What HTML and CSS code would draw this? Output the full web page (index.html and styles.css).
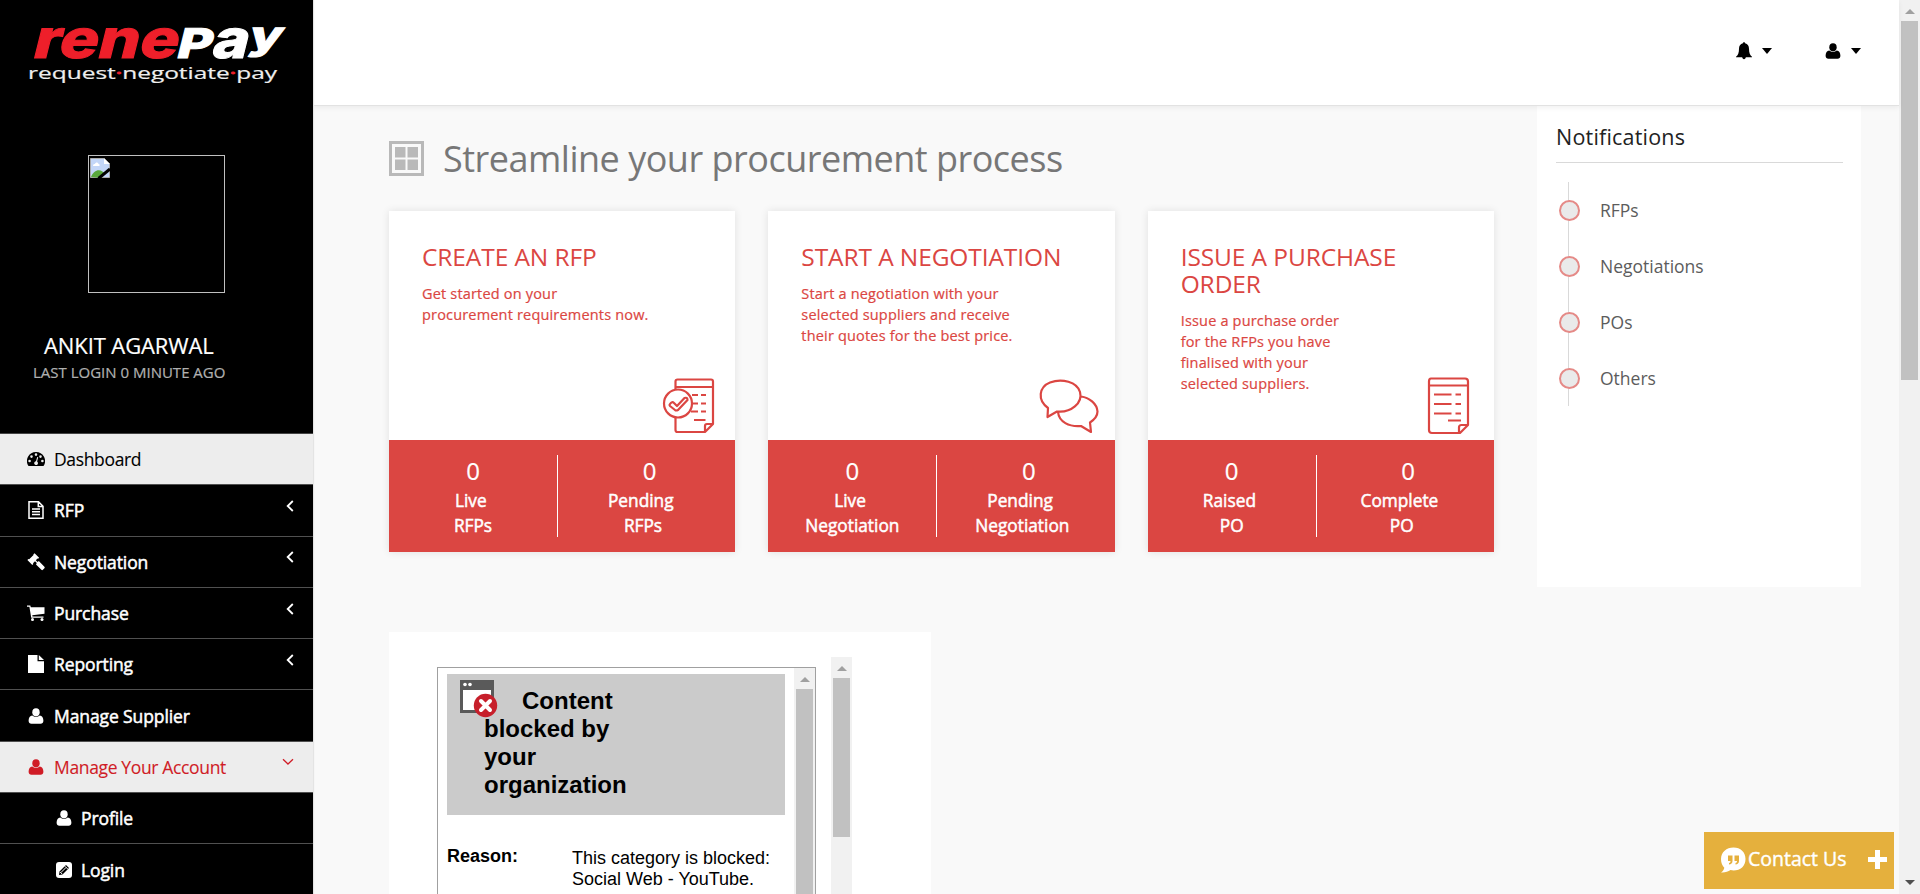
FILE: index.html
```html
<!DOCTYPE html>
<html lang="en">
<head>
<meta charset="utf-8">
<title>Renepay Dashboard</title>
<link rel="stylesheet" href="styles.css">
</head>
<body>
<svg class="sprite" aria-hidden="true">
  <symbol id="i-user" viewBox="0 0 16 16"><ellipse cx="8" cy="4.2" rx="3.7" ry="4"/><path d="M4.2 7.4C2 7.6.6 9.400.6 12.800.6 14.900 1.800 15.800 3.400 15.800h9.200c1.600 0 2.800-.9 2.800-3C15.400 9.400 14 7.600 11.800 7.400 9.700 9.200 6.300 9.200 4.200 7.400z"/></symbol>
  <symbol id="i-bell" viewBox="0 0 16 18"><path d="M8 .3c-.7 0-1.100.5-1.100 1C4.200 1.900 3 4.200 3 6.700c0 4-1 6.500-3 8.100v.5h6.200c.1 1.100.8 1.900 1.800 1.900s1.700-.8 1.800-1.900H16v-.5c-2-1.600-3-4.100-3-8.100 0-2.500-1.200-4.800-3.900-5.400 0-.5-.4-1-1.100-1z"/></symbol>
  <symbol id="i-dash" viewBox="0 0 18 15"><path fill-rule="evenodd" d="M9 .5a9 9 0 0 0-7.700 13.700c.2.300.4.400.7.400h14c.3 0 .5-.1.700-.4A9 9 0 0 0 9 .5zM2.600 8.200a1.300 1.300 0 1 1 0 2.600 1.300 1.300 0 0 1 0-2.600zM4.500 3.800a1.300 1.300 0 1 1 0 2.600 1.300 1.300 0 0 1 0-2.600zM9 1.800a1.300 1.300 0 1 1 0 2.600 1.300 1.300 0 0 1 0-2.600zM13.500 3.800a1.300 1.300 0 1 1 0 2.600 1.300 1.300 0 0 1 0-2.600zM15.400 8.200a1.300 1.300 0 1 1 0 2.600 1.300 1.300 0 0 1 0-2.600zM10.200 5.500l1 .3-1.100 4.300a1.900 1.900 0 1 1-1.100-.3z"/></symbol>
  <symbol id="i-doc" viewBox="0 0 16 18"><path fill="none" stroke="currentColor" stroke-width="1.500" d="M1 .8h9.500L15 5.300v11.900H1zM10.300 1v4.500H15M4 8h8M4 10.700h8M4 13.400h8"/></symbol>
  <symbol id="i-file" viewBox="0 0 16 18"><path d="M0 0h9.500v6.200H16V18H0zM10.800 0L16 5h-5.200z"/></symbol>
  <symbol id="i-gavel" viewBox="0 0 18 18"><path d="M7.600.2l4.500 4.500-1 1-.6-.2-1.700 1.700 1.800 1.800 1.200-.9 5.600 5.600c.5.500.5 1 0 1.500l-1.500 1.600c-.5.500-1 .5-1.500 0L9 11.400l.8-1.400L8 8.200l-2 2 .3.700-1 1L.4 7l1-1 .8.300 4.300-4.300-.1-.8z"/></symbol>
  <symbol id="i-cart" viewBox="0 0 18 16"><path d="M0 .5h3.300l.5 1.700H17.500v6.600L5.300 10.300l.2 1.200h11v1.300H4.200L2.400 1.800H0z"/><circle cx="5.500" cy="14.400" r="1.500"/><circle cx="15" cy="14.400" r="1.500"/></symbol>
  <symbol id="i-edit" viewBox="0 0 16 16"><rect width="16" height="16" rx="3"/><path fill="#000" d="M3 13l.5-3.500L10 3l3 3-6.500 6.500z"/><path stroke="#fff" d="M5 10.500l5-5M9 4.300L11.700 7M4 9.800l2.300 2.400"/></symbol>
  <symbol id="i-left" viewBox="0 0 8 12"><path fill="none" stroke="currentColor" stroke-width="1.800" d="M6.800 1L1.700 6l5.100 5"/></symbol>
  <symbol id="i-down" viewBox="0 0 12 8"><path fill="none" stroke="currentColor" stroke-width="1.300" d="M1 1.200l5 4.800 5-4.800"/></symbol>
</svg>

<div class="app">
  <aside class="sidebar">
    <svg class="logo" width="313" height="105" viewBox="0 0 313 105">
      <g class="logo-word" transform="translate(0 57.500) skewX(-14)">
        <text x="31" y="0" class="logo-red" textLength="145" lengthAdjust="spacingAndGlyphs">rene</text>
        <text x="175" y="0" class="logo-cap" textLength="35" lengthAdjust="spacingAndGlyphs">P</text>
        <text x="210" y="0" class="logo-white" textLength="36" lengthAdjust="spacingAndGlyphs">a</text>
        <text x="245" y="-9" class="logo-y" textLength="33" lengthAdjust="spacingAndGlyphs">y</text>
      </g>
      <text x="28" y="79" class="tagline" textLength="249" lengthAdjust="spacingAndGlyphs">request<tspan class="dot">·</tspan>negotiate<tspan class="dot">·</tspan>pay</text>
    </svg>
    <div class="profile">
      <div class="avatar">
        <svg width="20" height="20" viewBox="0 0 20 20"><path fill="#c3d6f7" stroke="#aaa" d="M.5.5H14l5.500 5.500v13.500H.5z"/><path fill="#fff" d="M14 0v6h6zM3 8c0-2 1.500-2 2-2 .5-2 3-2 3.500 0C10 6 10 8 9 8z"/><path fill="#59a83c" d="M1 19c3-8 10-9 14-3l-4 4z"/><path stroke="#000" stroke-width="3" d="M8.500 20.500L20 11"/></svg>
      </div>
      <h2 class="user-name">ANKIT AGARWAL</h2>
      <p class="last-login">LAST LOGIN 0 MINUTE AGO</p>
    </div>
    <ul class="menu">
      <li class="item light"><svg class="mi"><use href="#i-dash"/></svg><span>Dashboard</span></li>
      <li class="item"><svg class="mi"><use href="#i-doc"/></svg><span>RFP</span><svg class="chev"><use href="#i-left"/></svg></li>
      <li class="item"><svg class="mi"><use href="#i-gavel"/></svg><span>Negotiation</span><svg class="chev"><use href="#i-left"/></svg></li>
      <li class="item"><svg class="mi"><use href="#i-cart"/></svg><span>Purchase</span><svg class="chev"><use href="#i-left"/></svg></li>
      <li class="item"><svg class="mi"><use href="#i-file"/></svg><span>Reporting</span><svg class="chev"><use href="#i-left"/></svg></li>
      <li class="item"><svg class="mi small"><use href="#i-user"/></svg><span>Manage Supplier</span></li>
      <li class="item light open"><svg class="mi small"><use href="#i-user"/></svg><span>Manage Your Account</span><svg class="chev"><use href="#i-down"/></svg></li>
      <li class="item sub"><svg class="mi small"><use href="#i-user"/></svg><span>Profile</span></li>
      <li class="item sub"><svg class="mi small"><use href="#i-edit"/></svg><span>Login</span></li>
    </ul>
  </aside>

  <div class="page">
    <header class="topbar">
      <div class="drop"><svg width="16" height="18"><use href="#i-bell"/></svg><i class="caret"></i></div>
      <div class="drop"><svg width="16" height="16"><use href="#i-user"/></svg><i class="caret"></i></div>
    </header>
    <div class="content">
      <main class="main">
        <h1 class="title">
          <svg width="35" height="35" viewBox="0 0 35 35"><path fill="none" stroke="#b9b9b9" stroke-width="3" d="M1.500 1.500h32v32h-32z"/><path fill="#b9b9b9" d="M6 6h10.500v10.500H6zM18.500 6H29v10.500H18.500zM6 18.500h10.500V29H6zM18.500 18.500H29V29H18.500z"/></svg>
          <span>Streamline your procurement process</span>
        </h1>
        <div class="cards">
          <section class="card">
            <div class="card-body">
              <h3>CREATE AN RFP</h3>
              <p>Get started on your<br>procurement requirements now.</p>
              <svg class="card-icon" width="100" height="90" viewBox="0 0 100 90"><path d="M35.500 29v-7.500q0-2 2-2h33.500q2 0 2 2V64l-8 8H37.500q-2 0-2-2V57M35.500 27H73M73 64h-6q-2 0-2 2v6M52 35h6M61 35h5M53 43.500h5M61 43.500h5M51 51.500h7M61 51.500h5M54 60h11.500"/><circle cx="38" cy="43.500" r="14"/><path d="M30 44q2-3 4-1l3 3 7.500-8q3-1 3 2L38 50q-2 1-3 0l-5-4q-1-1 0-2z"/></svg>
            </div>
            <div class="stats">
              <div class="stat"><b>0</b><span>Live&nbsp;<br>RFPs</span></div>
              <div class="stat"><b>0</b><span>Pending&nbsp;<br>RFPs</span></div>
            </div>
          </section>
          <section class="card">
            <div class="card-body">
              <h3>START A NEGOTIATION</h3>
              <p>Start a negotiation with your<br>selected suppliers and receive<br>their quotes for the best price.</p>
              <svg class="card-icon talk" width="100" height="90" viewBox="0 0 100 90"><path d="M27 48C16 40 18 27 29 22.500 41 18 56 22 59 32c3 11-9 21-23 19.500L26.500 57zM60 36.500c8 1 16 7 16.500 15 0 5-3 8-7.500 11l1 9.500-10-6C48 67 38 62 37 52"/></svg>
            </div>
            <div class="stats">
              <div class="stat"><b>0</b><span>Live&nbsp;<br>Negotiation</span></div>
              <div class="stat"><b>0</b><span>Pending&nbsp;<br>Negotiation</span></div>
            </div>
          </section>
          <section class="card">
            <div class="card-body">
              <h3>ISSUE A PURCHASE ORDER</h3>
              <p>Issue a purchase order<br>for the RFPs you have<br>finalised with your<br>selected suppliers.</p>
              <svg class="card-icon order" width="100" height="90" viewBox="0 0 100 90"><path d="M21 18.500h34q3 0 3 3V65l-8 8H22q-3 0-3-3V21.500q0-3 2-3zM19 25.500H58M58 65h-6.500q-2.500 0-2.500 2.500V73M24 34.500h17.500M45.500 34.500H51M24 44h17.500M45.500 44H51M24 53.500h17.500M45.500 53.500H51M38 60.500h13"/></svg>
            </div>
            <div class="stats">
              <div class="stat"><b>0</b><span>Raised&nbsp;<br>PO</span></div>
              <div class="stat"><b>0</b><span>Complete&nbsp;<br>PO</span></div>
            </div>
          </section>
        </div>
        <section class="video">
          <div class="frame">
            <div class="frame-doc">
              <div class="blocked">
                <svg class="blocked-icon" width="38" height="39" viewBox="0 0 38 39"><path fill="#5a5a5a" d="M0 1h34v33H0z"/><path fill="#fff" d="M3 11h28v20H3z"/><circle cx="5" cy="5.500" r="1.800" fill="#fff"/><circle cx="10" cy="5.500" r="1.800" fill="#fff"/><circle cx="25.500" cy="26.500" r="11.700" fill="#c71f2b"/><path stroke="#fff" stroke-width="4" stroke-linecap="round" d="M21 22l9 9M30 22l-9 9"/></svg>
                <h4>Content blocked by your organization</h4>
              </div>
              <div class="reason"><strong>Reason:</strong><span>This category is blocked:<br>Social Web - YouTube.</span></div>
            </div>
            <div class="scroll"><i class="arrow up"></i><i class="thumb"></i></div>
          </div>
          <div class="scroll outer"><i class="arrow up"></i><i class="thumb"></i></div>
        </section>
      </main>
      <aside class="notes">
        <h2>Notifications</h2>
        <ul>
          <li>RFPs</li>
          <li>Negotiations</li>
          <li>POs</li>
          <li>Others</li>
        </ul>
      </aside>
    </div>
  </div>
  <div class="scroll window"><i class="arrow up"></i><i class="thumb"></i><i class="arrow down"></i></div>
</div>

<div class="contact">
  <svg width="26" height="26" viewBox="0 0 26 26"><path fill="#fff" d="M13.500.5C20.500.5 25.500 5 25.500 12s-5 11.500-12 11.500c-1 0-2-.1-3-.4-2.500 1.700-5.500 2.700-9.500 2.400 2-1.200 3-2.900 3.300-4.700C2.300 18.800 1 15.800 1 12 1 5 6.500.5 13.500.5z"/><path fill="#e5b03d" d="M8 8.500h4.500V14c0 2-1.500 3.500-3.500 3.500V16c1 0 1.500-1 1.500-2H8zM14.500 8.500H19V14c0 2-1.500 3.500-3.500 3.500V16c1 0 1.500-1 1.500-2h-2.500z"/></svg>
  <span>Contact Us</span>
  <svg class="plus" width="19" height="19" viewBox="0 0 19 19"><path fill="#fff" d="M7 0h5v7h7v5h-7v7H7v-7H0V7h7z"/></svg>
</div>
</body>
</html>
```
FILE: styles.css
```css
* { box-sizing: border-box; }
body {
  margin: 0;
  height: 894px;
  overflow: hidden;
  background: #f9f9f9;
  font-family: "Open Sans", "Noto Sans", sans-serif;
}
h1, h2, h3, h4, p, ul { margin: 0; padding: 0; font-weight: 400; list-style: none; }
svg { fill: currentColor; flex: none; }
.sprite { position: absolute; width: 0; height: 0; }
.app { display: flex; height: 894px; }

.sidebar { width: 313px; flex: none; background: #000; color: #fff; box-shadow: 1px 0 1px #e4e4e4; z-index: 3; }
.logo { display: block; }
.logo-word { font-family: Inter, sans-serif; font-weight: 800; }
.logo-word text { stroke-width: 1px; }
.logo-red { fill: #ee1f2a; stroke: #ee1f2a; font-size: 54px; }
.logo-white { fill: #fff; stroke: #fff; font-size: 54px; }
.logo-cap { fill: #fff; stroke: #fff; font-size: 41px; }
.logo-y { fill: #fff; stroke: #fff; font-size: 39px; }
.tagline { fill: #eee; font-size: 17px; stroke: #eee; stroke-width: .2px; }
.dot { fill: #ee1f2a; stroke: #ee1f2a; stroke-width: 1px; }
.profile { height: 328px; padding-top: 50px; }
.avatar { width: 137px; height: 138px; margin-left: 88px; padding: 2px 1px; border: 1px solid #c0c0c0; }
.avatar svg { display: block; }
.user-name { margin: 37px 0 0 44px; font-size: 22px; line-height: 30px; letter-spacing: -.1px; white-space: nowrap; -webkit-text-stroke: .2px; }
.last-login { margin: 1px 0 0 33px; font-size: 15px; line-height: 22px; color: #b0b0b0; white-space: nowrap; -webkit-text-stroke: .2px; }

.menu { border-top: 1px solid #444; }
.item {
  display: flex; align-items: center; height: 51.3px; padding: 0 19px 0 27px;
  border-bottom: 1px solid #505050; font-size: 17.500px; white-space: nowrap;
  letter-spacing: -.1px; -webkit-text-stroke: .5px;
}
.item span { margin-left: 9px; flex: 1; }
.mi { width: 18px; height: 18px; }
.mi.small { height: 16px; }
.chev { width: 8px; height: 12px; margin-top: -9px; }
.light { background: #ededed; color: #000; letter-spacing: -.35px; -webkit-text-stroke: .1px; }
.open { color: #d01c26; }
.open .chev { width: 12px; height: 8px; }
.sub { padding-left: 55px; }
.sub span { margin-left: 8px; }

.page { flex: 1; min-width: 0; }
.topbar {
  position: relative; z-index: 2; display: flex; justify-content: flex-end; align-items: center; gap: 53px;
  height: 106px; padding: 0 38px 4px 0; background: #fff; border-bottom: 1px solid #e2e2e2; box-shadow: 0 2px 5px rgba(0,0,0,.06);
}
.drop { display: flex; align-items: center; gap: 10px; }
.caret { border: 5px solid transparent; border-top: 6px solid #000; border-bottom: 0; }
.content { display: flex; padding-left: 76px; }
.main { width: 1105px; flex: none; }
.title { display: flex; align-items: center; gap: 19px; height: 105px; color: #777; font-size: 36px; letter-spacing: -.5px; white-space: nowrap; }
.cards { display: flex; gap: 33px; }
.card { flex: 1; height: 341px; background: #fff; box-shadow: 0 0 8px rgba(0,0,0,.1); color: #db4642; }
.card-body { position: relative; height: 229px; padding: 32px 33px 0; }
.card h3 { font-size: 24.500px; line-height: 27px; letter-spacing: -.1px; }
.card p { margin-top: 13px; font-size: 14.500px; line-height: 21px; letter-spacing: .18px; white-space: nowrap; -webkit-text-stroke: .2px; }
.card-icon { position: absolute; right: -5px; bottom: -10px; fill: none; stroke: currentColor; stroke-width: 2.200; stroke-linejoin: round; }
.card-icon.talk { right: -6px; }
.card-icon.order { right: -16px; }
.stats { display: flex; height: 112px; padding: 15px 0; background: #db4642; color: #fff; text-align: center; }
.stat { width: 169px; height: 82px; border-right: 1px solid #fff; font-size: 17.300px; line-height: 25px; -webkit-text-stroke: .5px; }
.stat + .stat { width: 170px; border: 0; }
.stat + .stat b { padding-left: 13px; }
.stat b { display: block; height: 33px; font-size: 24px; line-height: 31px; font-weight: 400; -webkit-text-stroke: .2px; }
.stat span { display: block; }

.video { display: flex; width: 542px; height: 262px; margin-top: 80px; background: #fff; padding: 25px 0 0 48px; }
.frame { display: flex; width: 379px; height: 260px; margin-top: 10px; border: 1px solid #a0a0a0; font-family: "Liberation Sans", Arial, sans-serif; color: #000; }
.frame-doc { width: 356px; padding: 6px 9px 0; flex: none; }
.blocked { position: relative; height: 141px; padding: 13px 0 0 37px; background: #cbcbcb; }
.blocked-icon { position: absolute; left: 13px; top: 5px; }
.blocked h4 { width: 150px; font-size: 24px; line-height: 28px; font-weight: 700; text-indent: 38px; }
.reason { display: flex; padding-top: 31px; font-size: 18px; line-height: 21px; }
.reason strong { width: 125px; }
.reason span { padding-top: 2px; white-space: nowrap; }

.scroll { display: flex; flex-direction: column; align-items: center; width: 21px; background: #f1f1f1; }
.arrow { border: 5px solid transparent; flex: none; }
.arrow.up { border-top: 0; border-bottom-color: #a0a0a0; margin: 9px 0 7px; }
.arrow.down { border-bottom: 0; border-top-color: #505050; margin: auto 0 9px; }
.thumb { width: 17px; flex: 1; background: #c1c1c1; }
.outer { margin-left: 15px; }
.outer .thumb { flex: none; height: 159px; }
.window .thumb { flex: none; height: 359px; }

.notes { width: 324px; height: 481px; margin-left: 43px; padding: 14px 18px 0 19px; background: #fff; }
.notes h2 { height: 43px; border-bottom: 1px solid #d9d9d9; color: #222; font-size: 21.500px; line-height: 34px; letter-spacing: .2px; }
.notes ul { margin: 19px 0 0 12px; border-left: 1px solid #d9d9d9; }
.notes li { display: flex; align-items: center; gap: 20px; height: 56px; padding-bottom: 1px; margin-left: -8px; color: #5c5c5c; font-size: 17.500px; position: relative; left: -2px; }
.notes li::before { content: ""; width: 17px; height: 17px; margin-top: 1px; border: 2px solid #e58a87; border-radius: 50%; background: #eaeaea; }

.contact {
  position: absolute; right: 26px; bottom: 5px; z-index: 5; display: flex; align-items: center;
  width: 190px; height: 57px; padding: 0 7px 3px 16px; background: #e5b03d; color: #fff; font-size: 19.500px;
}
.contact svg { margin-top: 2px; }
.contact span { margin: -2px 0 0 2px; white-space: nowrap; -webkit-text-stroke: .4px; }
.contact .plus { margin: 0 0 0 auto; }
```
